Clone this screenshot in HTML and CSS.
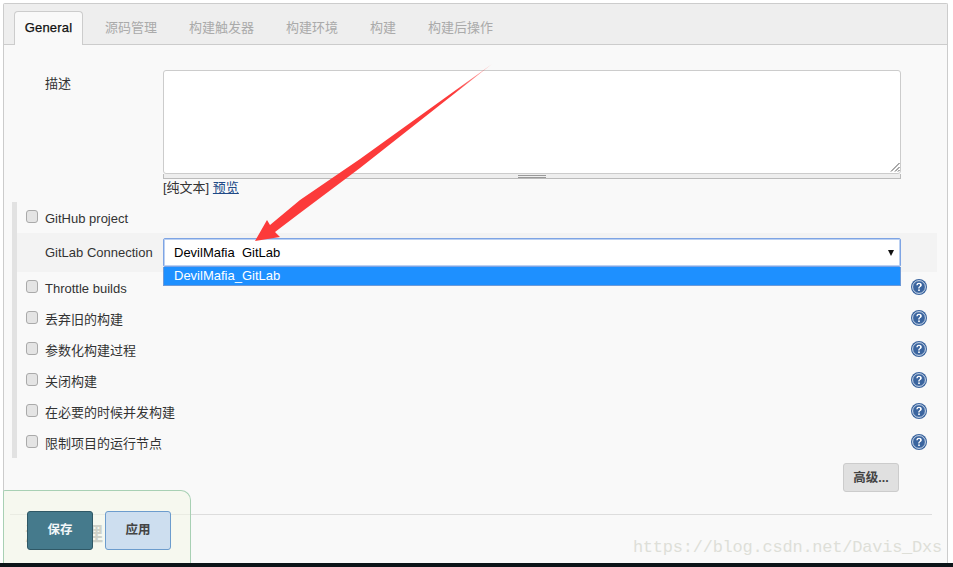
FILE: index.html
```html
<!DOCTYPE html>
<html lang="zh">
<head>
<meta charset="utf-8">
<title>General</title>
<link rel="stylesheet" href="styles.css">
</head>
<body>
<div class="frame">
  <div class="tabs">
    <a class="tab active">General</a>
    <a class="tab">源码管理</a>
    <a class="tab">构建触发器</a>
    <a class="tab">构建环境</a>
    <a class="tab">构建</a>
    <a class="tab">构建后操作</a>
  </div>
  <div class="content">
    <div class="desc">
      <div class="desc-label">描述</div>
      <div class="desc-field">
        <div class="textarea">
          <svg class="resize" width="10" height="10" viewBox="0 0 10 10"><path d="M9.500 1 1 9.500M9.500 5 5 9.500M9.500 8 8 9.500" stroke="#555" stroke-width="1" fill="none"/></svg>
        </div>
        <div class="grip"><span class="grip-mark"></span></div>
        <div class="desc-meta">[纯文本] <a class="link">预览</a></div>
      </div>
    </div>
    <div class="options">
      <div class="row"><span class="check"></span><span class="row-label">GitHub project</span></div>
      <div class="row conn">
        <span class="conn-label">GitLab Connection</span>
        <div class="select-wrap">
          <div class="select">DevilMafia&nbsp; GitLab<span class="caret"></span></div>
          <div class="option">DevilMafia_GitLab</div>
        </div>
      </div>
      <div class="row"><span class="check"></span><span class="row-label">Throttle builds</span><svg class="help"><use href="#q"/></svg></div>
      <div class="row"><span class="check"></span><span class="row-label">丢弃旧的构建</span><svg class="help"><use href="#q"/></svg></div>
      <div class="row"><span class="check"></span><span class="row-label">参数化构建过程</span><svg class="help"><use href="#q"/></svg></div>
      <div class="row"><span class="check"></span><span class="row-label">关闭构建</span><svg class="help"><use href="#q"/></svg></div>
      <div class="row"><span class="check"></span><span class="row-label">在必要的时候并发构建</span><svg class="help"><use href="#q"/></svg></div>
      <div class="row"><span class="check"></span><span class="row-label">限制项目的运行节点</span><svg class="help"><use href="#q"/></svg></div>
    </div>
    <div class="adv"><button class="adv-btn">高级...</button></div>
    <div class="section"><h2 class="section-title">源码管理</h2></div>
  </div>
</div>
<div class="footer"></div>

<div class="savebar">
  <button class="btn save">保存</button>
  <button class="btn apply">应用</button>
</div>

<svg class="arrow" width="953" height="567" viewBox="0 0 953 567">
  <defs>
    <linearGradient id="fade" gradientUnits="userSpaceOnUse" x1="492" y1="64" x2="455" y2="93">
      <stop offset="0" stop-color="#fc3a3a" stop-opacity=".3"/>
      <stop offset="1" stop-color="#fc3a3a"/>
    </linearGradient>
  </defs>
  <path d="M492 64 L360 168 L300 213 L275 232 L280 237 L255 241 L267 220 L270 225 L300 200 L360 159 Z" fill="url(#fade)"/>
</svg>

<div class="watermark">https://blog.csdn.net/Davis_Dxs</div>

<svg class="defs" width="0" height="0">
  <symbol id="q" viewBox="0 0 16 16">
    <circle cx="8" cy="8" r="8" fill="#3b659f"/>
    <circle cx="8" cy="8" r="6.400" fill="none" stroke="#dfe8f3" stroke-width=".9"/>
    <path d="M5.300 6.200C5.400 4.500 6.500 3.700 8 3.700c1.600 0 2.800.9 2.800 2.300 0 1.100-.7 1.600-1.400 2.100-.6.4-.8.700-.8 1.500H7.200c0-1.100.3-1.600 1-2.100.6-.5.9-.8.9-1.400 0-.6-.5-1-1.200-1-.7 0-1.100.4-1.200 1.100z" fill="#fff"/>
    <rect x="7.200" y="10.400" width="1.600" height="1.600" fill="#fff"/>
  </symbol>
</svg>
</body>
</html>
```

FILE: styles.css
```css
* { box-sizing: border-box; }
html, body { margin: 0; height: 567px; overflow: hidden; }
body {
  position: relative;
  display: flex;
  flex-direction: column;
  background: #fff;
  font-family: "Liberation Sans", "Noto Sans CJK SC", sans-serif;
  font-size: 13px;
  color: #333;
}
.frame {
  flex: 1;
  margin: 3px 5px 0 3px;
  border: 1px solid #ccc;
  border-bottom: 0;
  border-radius: 2px 2px 0 0;
  background: #f9f9f9;
  min-height: 0;
}
.footer { height: 4px; background: #0c1418; }

.tabs {
  display: flex;
  height: 41px;
  padding: 7px 0 0 10px;
  background: #eee;
  border-bottom: 1px solid #ccc;
}
.tab {
  height: 34px;
  padding: 8px 16px 0;
  line-height: 17px;
  color: #aaa;
  white-space: nowrap;
}
.tab.active {
  width: 69px;
  margin-right: 6px;
  padding: 7px 0 0;
  text-align: center;
  color: #111;
  background: #f9f9f9;
  border: 1px solid #ccc;
  border-bottom: 0;
  border-radius: 4px 4px 0 0;
  letter-spacing: .2px;
  -webkit-text-stroke: .25px #111;
}

.content { padding: 25px 0 0 8px; }
.desc { display: flex; }
.desc-label { width: 151px; padding: 5px 0 0 33px; line-height: 17px; }
.desc-field { width: 738px; }
.textarea {
  position: relative;
  height: 104px;
  background: #fff;
  border: 1px solid #ccc;
  border-radius: 3px;
}
.resize { position: absolute; right: 0; bottom: 1px; }
.grip {
  height: 5px;
  display: flex;
  justify-content: center;
  align-items: center;
  background: #eee;
  border: 1px solid #bbb;
  border-top: 0;
}
.grip-mark { width: 28px; height: 3px; border-top: 1px solid #999; border-bottom: 1px solid #999; }
.desc-meta { height: 17px; line-height: 17px; }
.link { color: #204a87; text-decoration: underline; }

.options {
  width: 925px;
  height: 256px;
  margin-top: 6px;
  border-left: 5px solid #e2e2e2;
}
.row {
  display: flex;
  align-items: center;
  height: 31px;
  padding-left: 9px;
  position: relative;
}
.check {
  width: 12px;
  height: 13px;
  margin-top: -3px;
  margin-right: 7px;
  background: #e4e4e4;
  border: 1px solid #aaa;
  border-radius: 3px;
}
.row-label { line-height: 17px; padding-top: 2px; }
.conn {
  height: 39px;
  align-items: flex-start;
  background: #f3f3f3;
  padding-left: 0;
}
.conn-label { width: 146px; padding: 11px 0 0 28px; line-height: 17px; }
.select-wrap { width: 738px; margin-top: 5px; }
.select {
  position: relative;
  height: 29px;
  padding-left: 10px;
  line-height: 28px;
  color: #000;
  background: #fff;
  border: 1px solid #7ea4e4;
  border-radius: 2px;
  box-shadow: inset 0 0 0 1px rgba(143, 178, 234, .6);
}
.caret {
  position: absolute;
  right: 6px;
  top: 11px;
  border: 3.500px solid transparent;
  border-top: 6px solid #111;
  border-bottom: 0;
}
.option {
  height: 19px;
  padding-left: 10px;
  line-height: 18px;
  color: #fff;
  background: #1e90ff;
  border: 1px solid #6d9ad8;
  border-top: 0;
}
.help { position: absolute; left: 894px; top: 7px; width: 16px; height: 16px; }
.adv { display: flex; justify-content: flex-end; width: 887px; margin-top: 5px; }
.adv-btn {
  width: 56px;
  height: 29px;
  padding: 0 0 2px;
  font: bold 12.500px "Liberation Sans", "Noto Sans CJK SC", sans-serif;
  color: #444;
  background: #e0e0e0;
  border: 1px solid #ccc;
  border-radius: 3px;
}
.section { margin: 22px 0 0 -2px; width: 922px; border-top: 1px solid #ddd; }
.section-title {
  margin: 5px 0 0 15px;
  font-size: 19.500px;
  line-height: 28px;
  font-weight: bold;
  color: #999;
}

.savebar {
  position: absolute;
  left: 3px;
  top: 490px;
  width: 188px;
  height: 73px;
  display: flex;
  gap: 12px;
  padding: 20px 0 0 23px;
  background: rgba(243, 247, 232, .6);
  border: 1px solid #a8d0b4;
  border-bottom: 0;
  border-radius: 2px 10px 0 0;
}
.btn {
  width: 66px;
  height: 39px;
  padding: 0 0 4px;
  font: bold 12.500px "Liberation Sans", "Noto Sans CJK SC", sans-serif;
  border-radius: 3px;
}
.save { color: #f2f6f8; background: #457a8c; border: 1px solid #2f5866; }
.apply { color: #444; background: #cddeef; border: 1px solid #6c9ccd; }

.arrow { position: absolute; left: 0; top: 0; pointer-events: none; }
.watermark {
  position: absolute;
  right: 11px;
  top: 538px;
  font: 17px "Liberation Mono", monospace;
  letter-spacing: -.23px;
  color: #dedfd8;
  white-space: nowrap;
}
.defs { position: absolute; }
```
